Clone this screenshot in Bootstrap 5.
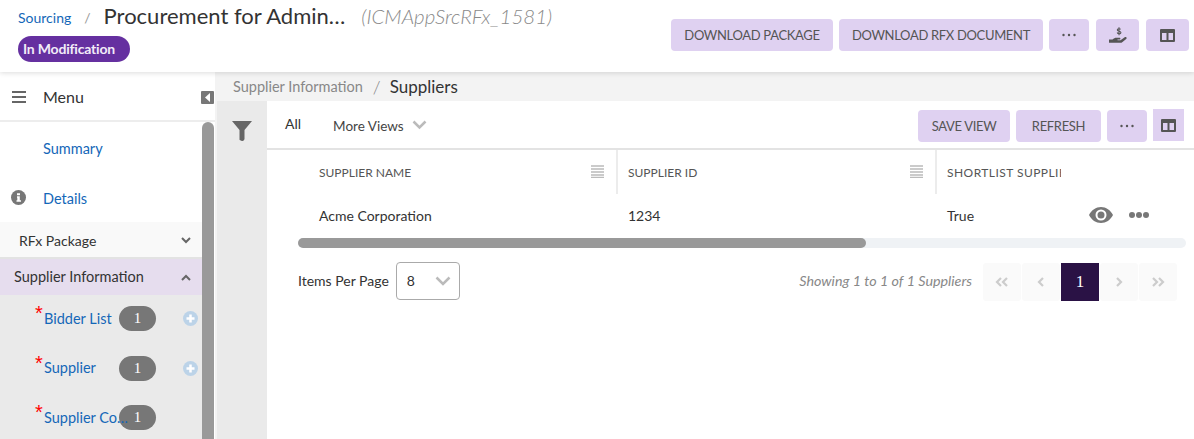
<!DOCTYPE html>
<html lang="en">
<head>
  <meta charset="UTF-8">
  <meta name="viewport" content="width=device-width, initial-scale=1.0">
  <title>Suppliers</title>
  <link href="https://cdn.jsdelivr.net/npm/bootstrap@5.3.0/dist/css/bootstrap.min.css" rel="stylesheet">
  <style>
    html, body { height: 100%; overflow: hidden; }
    body { font-family: Lato, "Open Sans", sans-serif; font-size: 14px; color: #333; background: #fff; }
    a { text-decoration: none; color: #1467b8; }
    .page-head { height: 72px; padding: 0 5px 0 18px; box-shadow: 0 1px 5px rgba(0,0,0,.14); position: relative; z-index: 2; }
    .crumb-top { font-size: 14px; height: 36px; padding-bottom: 2px; }
    .crumb-slash { color: #999; margin: 0 13px 0 13px; font-size: 14px; }
    .rfx-title { font-size: 22px; color: #333; line-height: 26px; margin-top: -3px; white-space: nowrap; }
    .rfx-id { font-size: 20.5px; font-style: italic; font-weight: 300; color: #8a8a8a; margin-left: 16px; line-height: 26px; margin-top: -3px; white-space: nowrap; }
    .status-pill { background: #6530a0; color: #f2ecf8; font-size: 14px; font-weight: 700; padding: 0 0 0 5px; height: 26px; line-height: 26px; width: 112px; text-align: left; border-radius: 13px; letter-spacing: -.2px; }
    .head-actions { padding-top: 19px; gap: 6px; }
    .act-btn { background: #dfd1f1; border: 0; border-radius: 4px; color: #555; font-size: 13px; letter-spacing: -.33px; height: 32px; padding: 1px 0 0; display: flex; align-items: center; justify-content: center; }
    .act-btn:hover { background: #dfd1f1; color: #555; }
    .act-ico { padding: 0; }
    .w-pkg { width: 162px; } .w-doc { width: 204px; } .w-more { width: 40px; } .w-hand { width: 43px; margin-left: 1px; } .w-cols { width: 43px; margin-left: 1px; }
    .w-save { width: 92px; } .w-refresh { width: 85px; } .w-cols2 { width: 31px; border-radius: 0; height: 32px; margin-top: -1px; }
    .body-wrap { height: calc(100% - 72px); }
    .side-panel { width: 215px; flex: none; position: relative; }
    .menu-head { height: 50px; flex: none; padding: 2px 0 0 12px; border-bottom: 2px solid #ededed; font-size: 16px; }
    .menu-head span { margin-left: 17px; }
    .collapse-tab { position: absolute; left: 201px; top: 19px; width: 13px; height: 13px; background: #777; border-radius: 1px; }
    .side-scroll { flex: 1; min-height: 0; overflow: hidden; }
    .side-list { width: 202px; flex: none; font-size: 14.5px; }
    .side-list > div { flex: none; }
    .side-thumb { width: 12px; background: #999; border-radius: 6px 6px 0 0; }
    .link-row { height: 50px; padding-left: 43px; position: relative; }
    .link-row svg { position: absolute; left: 11px; top: 18px; }
    .link-summary { height: 50px; padding-top: 16px; display: block; }
    .acc-row { height: 36px; color: #333; }
    .acc-rfx { background: #f9f9f9; padding: 2px 11px 0 19px; border-bottom: 2px solid #e3e3e3; height: 37px; font-size: 14px; }
    .acc-sup { background: #e6ddee; padding: 0 11px 0 14px; }
    .sub-list { background: #eaeaea; padding-bottom: 6px; }
    .sub-row { height: 49.500px; position: relative; padding-left: 44px; display: flex; align-items: center; padding-bottom: 2px; }
    .sub-row a { white-space: nowrap; position: relative; z-index: 1; }
    .req-star { position: absolute; left: 35px; top: 11px; color: #f00; font-family: "Liberation Sans", sans-serif; font-size: 20px; line-height: 14px; }
    .count-pill { position: absolute; left: 119px; top: 11px; width: 37px; height: 25px; border-radius: 13px; background: #777; color: #fff; font-family: "Liberation Serif", serif; font-size: 15px; line-height: 25px; text-align: center; }
    .add-dot { position: absolute; left: 183px; top: 16px; }
    .main-area { flex: 1; min-width: 0; background: #f3f3f3; }
    .trail { height: 29px; padding-left: 18px; color: #888; font-size: 14.5px; padding-top: 1px; }
    .trail-slash { margin: 0 9px 0 10px; font-size: 18px; font-weight: 300; }
    .trail-now { color: #333; font-size: 17px; }
    .content-row { flex: 1; min-height: 0; }
    .filter-col { width: 50px; margin-left: 2px; background: #eaeaea; padding: 18px 0 0 15px; flex: none; }
    .work-col { flex: 1; background: #fff; min-width: 0; }
    .view-bar { height: 49px; border-bottom: 2px solid #e3e3e3; padding: 9px 10px 0 18px; }
    .view-all { font-size: 14px; color: #333; margin-top: 3px; }
    .view-more { font-size: 13.5px; color: #444; margin-left: 32px; margin-top: 6px; }
    .grid-box { padding-left: 31px; padding-right: 8px; }
    .grid-tbl { table-layout: fixed; width: 100%; margin: 0; --bs-table-bg: transparent; }
    .grid-tbl th, .grid-tbl td { border: 0; padding: 0; vertical-align: middle; }
    .grid-tbl th { height: 44px; font-size: 12px; font-weight: 400; color: #555; position: relative; padding-top: 1px; }
    .grid-tbl td { height: 44px; font-size: 14px; color: #333; padding-bottom: 2px; }
    .th-inner { padding-left: 21px; display: block; white-space: nowrap; overflow: hidden; }
    .grid-tbl th.th-split { border-left: 2px solid #ececec; }
    .th-split .th-inner { padding-left: 10px; }
    .th-split .th-wide { font-size: 12px; letter-spacing: .45px; }
    .grid-tbl .td-split { padding-left: 11px; }
    .sort-lines { position: absolute; right: 12px; top: 15px; }
    .bar-track { height: 10px; background: #eff2f5; border-radius: 5px; }
    .bar-fill { height: 10px; background: #999; border-radius: 5px; }
    .pager-row { padding: 13px 17px 0 31px; }
    .per-label { padding-bottom: 2px; }
    .per-page { width: 64px; height: 38px; font-size: 14px; padding: 0 0 2px 10px; margin-left: 7px; border: 1px solid #aaa; border-radius: 4px; color: #333; font-family: inherit;
      background-image: url("data:image/svg+xml,%3csvg xmlns='http://www.w3.org/2000/svg' viewBox='0 0 16 10'%3e%3cpath fill='none' stroke='%23bbb' stroke-width='2.500' d='M1.500 1.500l6.500 6.500 6.500-6.500'/%3e%3c/svg%3e"); background-size: 16px 10px; background-position: right 8px center; }
    .show-note { font-style: italic; color: #888; font-size: 14.3px; margin-right: 11px; padding-bottom: 1px; }
    .pg-set { margin: 2px 0 0; gap: 2px; }
    .pg-set .page-link { width: 38px; height: 38px; padding: 0; border: 0; border-radius: 3px !important; background: #fafafa; color: #ccc; display: flex; align-items: center; justify-content: center; margin: 0; }
    .pg-set .active .page-link { background: #2a1245; color: #fff; font-family: "Liberation Serif", serif; font-size: 17px; border-radius: 0 !important; }
  </style>
</head>
<body>

<div class="page-head d-flex justify-content-between bg-white">
  <div>
    <div class="crumb-top d-flex align-items-center">
      <a href="#">Sourcing</a><span class="crumb-slash">/</span>
      <span class="rfx-title">Procurement for Admin…</span>
      <span class="rfx-id">(ICMAppSrcRFx_1581)</span>
    </div>
    <span class="badge status-pill d-block">In Modification</span>
  </div>
  <div class="head-actions d-flex align-items-start">
    <button class="btn act-btn w-pkg">DOWNLOAD PACKAGE</button>
    <button class="btn act-btn w-doc">DOWNLOAD RFX DOCUMENT</button>
    <button class="btn act-btn act-ico w-more"><svg width="14" height="4"><circle cx="1.500" cy="2" r="1.200" fill="#555"/><circle cx="7" cy="2" r="1.200" fill="#555"/><circle cx="12.500" cy="2" r="1.200" fill="#555"/></svg></button>
    <button class="btn act-btn act-ico w-hand">
      <svg width="18" height="16" viewBox="0 0 18 16"><path d="M0 12.500h3.500c1.200-1.300 2.500-1.800 4-1.800h3c1.200 0 1.200 1.900 0 1.900H8.500v.6h3l4.200-3c1.300-.8 2.700.6 1.500 1.700l-4 3.300c-.5.4-1 .6-1.600.6H0z" fill="#555"/><path d="M11.600 2.400c-.4-.9-3.300-1-3.300.6 0 1.700 3.600.9 3.600 2.600 0 1.500-3.200 1.400-3.700-.1M10 .3v8" fill="none" stroke="#555" stroke-width="1.100"/></svg>
    </button>
    <button class="btn act-btn act-ico w-cols"><svg width="15" height="13" viewBox="0 0 15 13"><path d="M1 0h13a1 1 0 0 1 1 1v11a1 1 0 0 1-1 1H1a1 1 0 0 1-1-1V1a1 1 0 0 1 1-1zm1 4v7h4.500V4zm6.500 0v7H13V4z" fill="#555" fill-rule="evenodd"/></svg></button>
  </div>
</div>

<div class="body-wrap d-flex">
  <div class="side-panel d-flex flex-column">
    <div class="menu-head d-flex align-items-center">
      <svg class="ms-0" width="14" height="12"><path d="M0 1h14M0 6h14M0 11h14" stroke="#666" stroke-width="2"/></svg>
      <span>Menu</span>
    </div>
    <div class="collapse-tab d-flex align-items-center justify-content-center"><svg width="6" height="9"><path d="M5 0v9L0 4.500z" fill="#fff"/></svg></div>
    <div class="side-scroll d-flex">
      <div class="side-list d-flex flex-column">
        <div class="link-row"><a class="link-summary" href="#">Summary</a></div>
        <div class="link-row">
          <svg width="15" height="15" viewBox="0 0 15 15"><circle cx="7.500" cy="7.500" r="7.500" fill="#777"/><path d="M6 3.500h3v2H6zM6 6.500h2.800v4H10V12H5.500v-1.500h.8V8H6z" fill="#fff" transform="translate(0 -.3)"/></svg>
          <a class="link-summary" href="#">Details</a>
        </div>
        <div class="acc-row acc-rfx d-flex align-items-center justify-content-between">
          <span>RFx Package</span>
          <svg width="10" height="7"><path d="M1 1l4 4 4-4" fill="none" stroke="#666" stroke-width="2"/></svg>
        </div>
        <div class="acc-row acc-sup d-flex align-items-center justify-content-between">
          <span>Supplier Information</span>
          <svg width="10" height="7"><path d="M1 6l4-4 4 4" fill="none" stroke="#666" stroke-width="2"/></svg>
        </div>
        <div class="sub-list" id="subList"></div>
      </div>
      <div class="side-thumb"></div>
    </div>
  </div>

  <div class="main-area d-flex flex-column">
    <div class="trail d-flex align-items-center">
      <span>Supplier Information</span><span class="trail-slash">/</span><span class="trail-now">Suppliers</span>
    </div>
    <div class="content-row d-flex">
      <div class="filter-col">
        <svg width="20" height="20" viewBox="0 0 20 22" preserveAspectRatio="none"><path d="M0 0h20L12.500 10v9.500c0 1-1 2.500-2 2.500-.8 0-2.500-1-3-1.500V10z" fill="#666"/></svg>
      </div>
      <div class="work-col">
        <div class="view-bar d-flex">
          <span class="view-all">All</span>
          <span class="view-more">More Views</span>
          <svg class="ms-2" style="margin-top:10px" width="15" height="10"><path d="M1.500 1.500l6 6 6-6" fill="none" stroke="#bbb" stroke-width="2.500"/></svg>
          <div class="d-flex ms-auto" style="gap:6px">
            <button class="btn act-btn w-save">SAVE VIEW</button>
            <button class="btn act-btn w-refresh">REFRESH</button>
            <button class="btn act-btn act-ico w-more"><svg width="14" height="4"><circle cx="1.500" cy="2" r="1.200" fill="#555"/><circle cx="7" cy="2" r="1.200" fill="#555"/><circle cx="12.500" cy="2" r="1.200" fill="#555"/></svg></button>
            <button class="btn act-btn act-ico w-cols2"><svg width="15" height="13" viewBox="0 0 15 13"><path d="M1 0h13a1 1 0 0 1 1 1v11a1 1 0 0 1-1 1H1a1 1 0 0 1-1-1V1a1 1 0 0 1 1-1zm1 4v7h4.500V4zm6.500 0v7H13V4z" fill="#555" fill-rule="evenodd"/></svg></button>
          </div>
        </div>
        <div class="grid-box">
          <table class="table grid-tbl">
            <colgroup><col style="width:319px"><col style="width:319px"><col style="width:125px"><col></colgroup>
            <thead>
              <tr>
                <th><span class="th-inner">SUPPLIER NAME</span><svg class="sort-lines" width="13" height="13"><path d="M0 1h13M0 4h13M0 7h13M0 10h13M0 12.500h13" stroke="#bbb" stroke-width="1.500"/></svg></th>
                <th class="th-split"><span class="th-inner">SUPPLIER ID</span><svg class="sort-lines" width="13" height="13"><path d="M0 1h13M0 4h13M0 7h13M0 10h13M0 12.500h13" stroke="#bbb" stroke-width="1.500"/></svg></th>
                <th class="th-split"><span class="th-inner th-wide">SHORTLIST SUPPLIER</span></th>
                <th></th>
              </tr>
            </thead>
            <tbody>
              <tr>
                <td><span class="th-inner">Acme Corporation</span></td>
                <td class="td-split">1234</td>
                <td class="td-split">True</td>
                <td>
                  <div class="d-flex align-items-center" style="gap:16px;padding-left:28px">
                    <svg width="24" height="16" viewBox="0 0 24 16"><path d="M12 0C7 0 2.500 3 0 8c2.500 5 7 8 12 8s9.500-3 12-8c-2.500-5-7-8-12-8zm0 13.500A5.500 5.500 0 1 1 12 2.500a5.500 5.500 0 0 1 0 11z" fill="#777" fill-rule="evenodd"/><circle cx="12" cy="8" r="3.500" fill="#777"/></svg>
                    <svg width="20" height="6"><circle cx="3" cy="3" r="3" fill="#777"/><circle cx="10" cy="3" r="3" fill="#777"/><circle cx="17" cy="3" r="3" fill="#777"/></svg>
                  </div>
                </td>
              </tr>
            </tbody>
          </table>
          <div class="bar-track"><div class="bar-fill" style="width:64%"></div></div>
        </div>
        <div class="pager-row d-flex align-items-center">
          <span class="per-label">Items Per Page</span>
          <select class="form-select per-page"><option>8</option></select>
          <span class="show-note ms-auto">Showing 1 to 1 of 1 Suppliers</span>
          <ul class="pagination pg-set">
            <li class="page-item"><a class="page-link" href="#"><svg width="14" height="10"><path d="M6 1L2 5l4 4M12 1L8 5l4 4" fill="none" stroke="#ccc" stroke-width="2.200"/></svg></a></li>
            <li class="page-item"><a class="page-link" href="#"><svg width="8" height="10"><path d="M6 1L2 5l4 4" fill="none" stroke="#ccc" stroke-width="2.200"/></svg></a></li>
            <li class="page-item active"><a class="page-link" href="#">1</a></li>
            <li class="page-item"><a class="page-link" href="#"><svg width="8" height="10"><path d="M2 1l4 4-4 4" fill="none" stroke="#ccc" stroke-width="2.200"/></svg></a></li>
            <li class="page-item"><a class="page-link" href="#"><svg width="14" height="10"><path d="M2 1l4 4-4 4M8 1l4 4-4 4" fill="none" stroke="#ccc" stroke-width="2.200"/></svg></a></li>
          </ul>
        </div>
      </div>
    </div>
  </div>
</div>

<script>
  // Menu entries under Supplier Information
  const subItems = [
    { name: 'Bidder List', add: true },
    { name: 'Supplier', add: true },
    { name: 'Supplier Co…', add: false }
  ];
  const plus = '<svg class="add-dot" width="15" height="15" viewBox="0 0 15 15"><circle cx="7.500" cy="7.500" r="7.500" fill="#bcd3e8"/><path d="M7.500 3.500v8M3.500 7.500h8" stroke="#fff" stroke-width="2.500"/></svg>';
  document.getElementById('subList').innerHTML = subItems.map(item => `
    <div class="sub-row">
      <span class="req-star">*</span>
      <a href="#">${item.name}</a>
      <span class="count-pill">1</span>
      ${item.add ? plus : ''}
    </div>`).join('');
</script>
<script src="https://cdn.jsdelivr.net/npm/bootstrap@5.3.0/dist/js/bootstrap.bundle.min.js"></script>
</body>
</html>
